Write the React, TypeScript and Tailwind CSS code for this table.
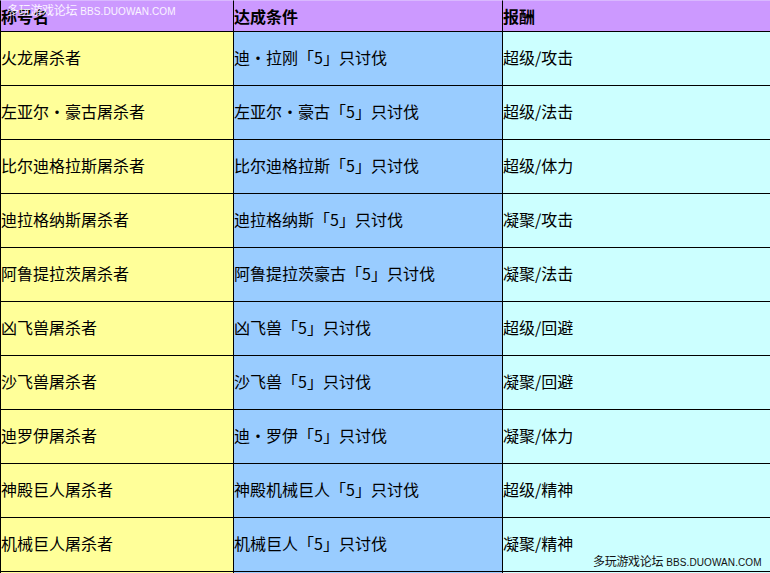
import React from 'react';

const rows: [string, string, string][] = [
  ['火龙屠杀者', '迪・拉刚「5」只讨伐', '超级/攻击'],
  ['左亚尔・豪古屠杀者', '左亚尔・豪古「5」只讨伐', '超级/法击'],
  ['比尔迪格拉斯屠杀者', '比尔迪格拉斯「5」只讨伐', '超级/体力'],
  ['迪拉格纳斯屠杀者', '迪拉格纳斯「5」只讨伐', '凝聚/攻击'],
  ['阿鲁提拉茨屠杀者', '阿鲁提拉茨豪古「5」只讨伐', '凝聚/法击'],
  ['凶飞兽屠杀者', '凶飞兽「5」只讨伐', '超级/回避'],
  ['沙飞兽屠杀者', '沙飞兽「5」只讨伐', '凝聚/回避'],
  ['迪罗伊屠杀者', '迪・罗伊「5」只讨伐', '凝聚/体力'],
  ['神殿巨人屠杀者', '神殿机械巨人「5」只讨伐', '超级/精神'],
  ['机械巨人屠杀者', '机械巨人「5」只讨伐', '凝聚/精神'],
  ['', '', ''],
];

const font = { fontFamily: '"Noto Sans CJK SC", "Liberation Sans", sans-serif' };

const Watermark: React.FC<{ className: string }> = ({ className }) => (
  <div className={`absolute flex items-baseline whitespace-nowrap ${className}`}>
    <span className="text-[12px] leading-none tracking-[-0.3px]" style={font}>多玩游戏论坛</span>
    <span className="ml-[3px] text-[10px] leading-none tracking-[0.1px] font-['Liberation_Sans',sans-serif]">
      BBS.DUOWAN.COM
    </span>
  </div>
);

export default function App() {
  return (
    <div className="relative h-[573px] w-[770px] overflow-hidden bg-white text-black" style={font}>
      <div className="grid grid-cols-[234px_269px_1fr] auto-rows-[54px] grid-rows-[32px]">
        <div className="flex items-center border-l border-r border-b border-t border-t-[#d9b8ff] border-black bg-[#cc99ff] text-[16px] font-bold leading-none">称号名</div>
        <div className="flex items-center border-r border-b border-t border-t-[#d9b8ff] border-black bg-[#cc99ff] text-[16px] font-bold leading-none">达成条件</div>
        <div className="flex items-center border-b border-t border-t-[#d9b8ff] border-black bg-[#cc99ff] text-[16px] font-bold leading-none">报酬</div>
        {rows.map(([title, cond, reward], i) => (
          <React.Fragment key={i}>
            <div className="flex items-center border-l border-r border-b border-black bg-[#ffff99] pb-[3px] text-[16px] leading-none">{title}</div>
            <div className="flex items-center border-r border-b border-black bg-[#99ccff] pb-[3px] text-[16px] leading-none">{cond}</div>
            <div className="flex items-center border-b border-black bg-[#ccffff] pb-[3px] text-[16px] leading-none">{reward}</div>
          </React.Fragment>
        ))}
      </div>
      <Watermark className="left-[7px] top-[4px] text-white/90" />
      <Watermark className="left-[593px] top-[555px] text-[#111]" />
    </div>
  );
}
